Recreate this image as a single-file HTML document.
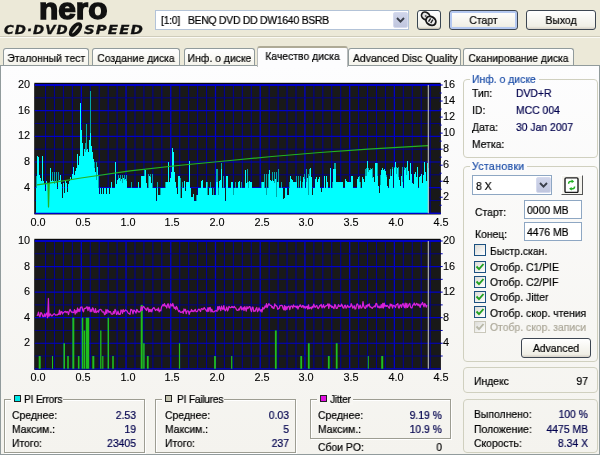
<!DOCTYPE html>
<html lang="ru"><head><meta charset="utf-8"><title>Nero CD-DVD Speed</title>
<style>
html,body{margin:0;padding:0;}
body{width:600px;height:455px;overflow:hidden;background:#ece9d8;position:relative;font-family:"Liberation Sans",sans-serif;font-size:11.4px;color:#000;}
.t{position:absolute;white-space:nowrap;line-height:12px;height:12px;transform:scaleX(0.912);transform-origin:0 50%;will-change:transform;-webkit-text-stroke:0.22px;}
.c{text-align:center;transform-origin:50% 50%;}
.r{text-align:right;transform-origin:100% 50%;}
.nv{color:#00004e;}
.bl{color:#1c4ea8;}
.gr{color:#aca899;}
.ax{font-size:10.9px;transform:none;-webkit-text-stroke:0.1px;}
.abs{position:absolute;}
.gb{position:absolute;border:1px solid #d0d0bf;border-radius:4px;box-sizing:border-box;}
.eg{position:absolute;box-sizing:border-box;border:1px solid #9d9d92;box-shadow:1px 1px 0 #fff, inset 1px 1px 0 #fff;}
.lg{position:absolute;background:#fafaf7;height:10px;}
.tab{position:absolute;box-sizing:border-box;border:1px solid #919b9c;border-bottom:none;border-radius:3px 3px 0 0;background:linear-gradient(#ffffff,#f5f4ec);}
.inp{position:absolute;box-sizing:border-box;border:1px solid #8ea7c3;background:#fff;}
.btn{position:absolute;box-sizing:border-box;border:1px solid #3d4652;border-radius:3px;background:linear-gradient(#ffffff,#f0efe6 85%,#d6d0c5);}
.cb{position:absolute;box-sizing:border-box;width:12px;height:12px;border:1px solid #1c5180;background:linear-gradient(135deg,#dcdcd7,#ffffff);}
.dd{position:absolute;box-sizing:border-box;border:1px solid #d5daee;border-radius:2px;background:linear-gradient(#d0d5ea,#c0c6de);}
</style></head><body>

<div class="abs" style="left:0;top:65px;width:600px;height:389.5px;box-sizing:border-box;border:1px solid #919b9c;background:linear-gradient(#fdfdfe,#f4f3ee);"></div>
<div class="abs" style="left:0;top:36px;width:600px;height:1px;background:#cfccbb;"></div><div class="abs" style="left:0;top:37px;width:600px;height:1px;background:#fbfaf5;"></div>
<div class="t" id="nero" style="left:39px;top:-9.4px;height:36px;line-height:36px;font-size:29.4px;font-weight:bold;letter-spacing:0px;-webkit-text-stroke:1.4px #111;color:#111;transform-origin:0 50%;transform:scaleX(1.075);">nero</div>
<div class="t" id="cdd" style="left:3.8px;top:23.6px;font-family:'DejaVu Sans','Liberation Sans',sans-serif;font-size:11.8px;font-weight:bold;font-style:italic;letter-spacing:0.9px;transform-origin:0 50%;transform:scaleX(1.135);-webkit-text-stroke:0.3px #111;color:#111;">CD&middot;DVD</div>
<svg class="abs" style="left:67px;top:22px" width="17" height="15" viewBox="0 0 17 15"><ellipse cx="8.5" cy="7.5" rx="8.6" ry="4.9" transform="rotate(-50 8.5 7.5)" fill="#111"/><ellipse cx="8.5" cy="7.5" rx="5" ry="0.9" transform="rotate(-50 8.5 7.5)" fill="#d8d5c6"/></svg>
<div class="t" id="spd" style="left:84px;top:23.6px;font-family:'DejaVu Sans','Liberation Sans',sans-serif;font-size:11.8px;font-weight:bold;font-style:italic;letter-spacing:0.9px;transform-origin:0 50%;transform:scaleX(1.26);-webkit-text-stroke:0.3px #111;color:#111;">SPEED</div>
<div class="inp" style="left:155px;top:10px;width:254px;height:20px;border-color:#b3c3d8;"></div>
<div class="t" style="left:161px;top:14.4px;letter-spacing:-0.27px;">[1:0]&nbsp;&nbsp;&nbsp;BENQ DVD DD DW1640 BSRB</div>
<div class="dd" style="left:393px;top:12px;width:15px;height:16px;"></div>
<svg class="abs" style="left:396px;top:17px" width="9" height="7" viewBox="0 0 9 7"><path d="M1 1 L4.5 4.6 L8 1" fill="none" stroke="#3a3f4a" stroke-width="1.9"/></svg>
<div class="btn" style="left:417px;top:10px;width:24px;height:20px;border-color:#3a4652;box-shadow:inset 0 -1px 0 #c9c5b6;"></div>
<svg class="abs" style="left:419px;top:10px" width="20" height="18" viewBox="0 0 20 18"><g transform="rotate(32 10 9)"><ellipse cx="5.6" cy="8.2" rx="4.4" ry="3.6" fill="#e4e4e4" stroke="#1a1a1a" stroke-width="1.7"/><ellipse cx="12.6" cy="9.6" rx="5.2" ry="4.1" fill="#ededed" stroke="#151515" stroke-width="1.9"/><path d="M11 7.5 L11 11.5 M13.6 7.5 L13.6 11.5" stroke="#222" stroke-width="1.4"/><circle cx="5.6" cy="8.2" r="1" fill="#555"/></g></svg>
<div class="btn" style="left:449px;top:10px;width:69px;height:20px;box-shadow:inset 0 0 0 2px #b4c8f0;"></div>
<div class="t c" style="left:449px;top:14.4px;width:69px;">Старт</div>
<div class="btn" style="left:526px;top:10px;width:70px;height:20px;"></div>
<div class="t c" style="left:526px;top:14.4px;width:70px;">Выход</div>
<div class="tab" style="left:2.5px;top:48px;width:86.5px;height:17px;"></div>
<div class="t c" style="left:2.5px;top:52.4px;width:86.5px;">Эталонный тест</div>
<div class="tab" style="left:92px;top:48px;width:88px;height:17px;"></div>
<div class="t c" style="left:92px;top:52.4px;width:88px;">Создание диска</div>
<div class="tab" style="left:184px;top:48px;width:71px;height:17px;"></div>
<div class="t c" style="left:184px;top:52.4px;width:71px;">Инф. о диске</div>
<div class="tab" style="left:257px;top:46px;width:91px;height:21px;background:#fdfdfe;border-top:2px solid #aeaa96;border-left-color:#b9bcbc;border-right-color:#b9bcbc;"></div>
<div class="t c" style="left:257px;top:50px;width:91px;">Качество диска</div>
<div class="tab" style="left:348px;top:48px;width:113px;height:17px;"></div>
<div class="t c" style="left:348px;top:52.4px;width:113px;">Advanced Disc Quality</div>
<div class="tab" style="left:463px;top:48px;width:111px;height:17px;"></div>
<div class="t c" style="left:463px;top:52.4px;width:111px;">Сканирование диска</div>
<svg class="abs" style="left:0;top:0;filter:blur(0.3px);" width="600" height="455" viewBox="0 0 600 455">
<rect x="34.3" y="82.8" width="406.4" height="131.5" fill="#0a0a0a"/><rect x="34.599999999999994" y="84.0" width="406.09999999999997" height="130.3" fill="#191919"/>
<line x1="45.54" y1="85.0" x2="45.54" y2="213.3" stroke="#000094" stroke-width="1.05"/><line x1="54.49" y1="85.0" x2="54.49" y2="213.3" stroke="#000094" stroke-width="1.05"/><line x1="63.43" y1="85.0" x2="63.43" y2="213.3" stroke="#000094" stroke-width="1.05"/><line x1="72.38" y1="85.0" x2="72.38" y2="213.3" stroke="#000094" stroke-width="1.05"/><line x1="81.32" y1="85.0" x2="81.32" y2="213.3" stroke="#0000c8" stroke-width="1.3"/><line x1="90.27" y1="85.0" x2="90.27" y2="213.3" stroke="#000094" stroke-width="1.05"/><line x1="99.21" y1="85.0" x2="99.21" y2="213.3" stroke="#000094" stroke-width="1.05"/><line x1="108.16" y1="85.0" x2="108.16" y2="213.3" stroke="#000094" stroke-width="1.05"/><line x1="117.10" y1="85.0" x2="117.10" y2="213.3" stroke="#000094" stroke-width="1.05"/><line x1="126.04" y1="85.0" x2="126.04" y2="213.3" stroke="#0000c8" stroke-width="1.3"/><line x1="134.99" y1="85.0" x2="134.99" y2="213.3" stroke="#000094" stroke-width="1.05"/><line x1="143.93" y1="85.0" x2="143.93" y2="213.3" stroke="#000094" stroke-width="1.05"/><line x1="152.88" y1="85.0" x2="152.88" y2="213.3" stroke="#000094" stroke-width="1.05"/><line x1="161.82" y1="85.0" x2="161.82" y2="213.3" stroke="#000094" stroke-width="1.05"/><line x1="170.77" y1="85.0" x2="170.77" y2="213.3" stroke="#0000c8" stroke-width="1.3"/><line x1="179.71" y1="85.0" x2="179.71" y2="213.3" stroke="#000094" stroke-width="1.05"/><line x1="188.66" y1="85.0" x2="188.66" y2="213.3" stroke="#000094" stroke-width="1.05"/><line x1="197.60" y1="85.0" x2="197.60" y2="213.3" stroke="#000094" stroke-width="1.05"/><line x1="206.54" y1="85.0" x2="206.54" y2="213.3" stroke="#000094" stroke-width="1.05"/><line x1="215.49" y1="85.0" x2="215.49" y2="213.3" stroke="#0000c8" stroke-width="1.3"/><line x1="224.43" y1="85.0" x2="224.43" y2="213.3" stroke="#000094" stroke-width="1.05"/><line x1="233.38" y1="85.0" x2="233.38" y2="213.3" stroke="#000094" stroke-width="1.05"/><line x1="242.32" y1="85.0" x2="242.32" y2="213.3" stroke="#000094" stroke-width="1.05"/><line x1="251.27" y1="85.0" x2="251.27" y2="213.3" stroke="#000094" stroke-width="1.05"/><line x1="260.21" y1="85.0" x2="260.21" y2="213.3" stroke="#0000c8" stroke-width="1.3"/><line x1="269.16" y1="85.0" x2="269.16" y2="213.3" stroke="#000094" stroke-width="1.05"/><line x1="278.10" y1="85.0" x2="278.10" y2="213.3" stroke="#000094" stroke-width="1.05"/><line x1="287.04" y1="85.0" x2="287.04" y2="213.3" stroke="#000094" stroke-width="1.05"/><line x1="295.99" y1="85.0" x2="295.99" y2="213.3" stroke="#000094" stroke-width="1.05"/><line x1="304.93" y1="85.0" x2="304.93" y2="213.3" stroke="#0000c8" stroke-width="1.3"/><line x1="313.88" y1="85.0" x2="313.88" y2="213.3" stroke="#000094" stroke-width="1.05"/><line x1="322.82" y1="85.0" x2="322.82" y2="213.3" stroke="#000094" stroke-width="1.05"/><line x1="331.77" y1="85.0" x2="331.77" y2="213.3" stroke="#000094" stroke-width="1.05"/><line x1="340.71" y1="85.0" x2="340.71" y2="213.3" stroke="#000094" stroke-width="1.05"/><line x1="349.66" y1="85.0" x2="349.66" y2="213.3" stroke="#0000c8" stroke-width="1.3"/><line x1="358.60" y1="85.0" x2="358.60" y2="213.3" stroke="#000094" stroke-width="1.05"/><line x1="367.54" y1="85.0" x2="367.54" y2="213.3" stroke="#000094" stroke-width="1.05"/><line x1="376.49" y1="85.0" x2="376.49" y2="213.3" stroke="#000094" stroke-width="1.05"/><line x1="385.43" y1="85.0" x2="385.43" y2="213.3" stroke="#000094" stroke-width="1.05"/><line x1="394.38" y1="85.0" x2="394.38" y2="213.3" stroke="#0000c8" stroke-width="1.3"/><line x1="403.32" y1="85.0" x2="403.32" y2="213.3" stroke="#000094" stroke-width="1.05"/><line x1="412.27" y1="85.0" x2="412.27" y2="213.3" stroke="#000094" stroke-width="1.05"/><line x1="421.21" y1="85.0" x2="421.21" y2="213.3" stroke="#000094" stroke-width="1.05"/><line x1="430.16" y1="85.0" x2="430.16" y2="213.3" stroke="#000094" stroke-width="1.05"/><line x1="34.8" y1="85.00" x2="440.7" y2="85.00" stroke="#0000c8" stroke-width="2.0"/><line x1="34.8" y1="97.83" x2="440.7" y2="97.83" stroke="#000090" stroke-width="0.9"/><line x1="34.8" y1="110.66" x2="440.7" y2="110.66" stroke="#0000c8" stroke-width="1.2"/><line x1="34.8" y1="123.49" x2="440.7" y2="123.49" stroke="#000090" stroke-width="0.9"/><line x1="34.8" y1="136.32" x2="440.7" y2="136.32" stroke="#0000c8" stroke-width="1.2"/><line x1="34.8" y1="149.15" x2="440.7" y2="149.15" stroke="#000090" stroke-width="0.9"/><line x1="34.8" y1="161.98" x2="440.7" y2="161.98" stroke="#0000c8" stroke-width="1.2"/><line x1="34.8" y1="174.81" x2="440.7" y2="174.81" stroke="#000090" stroke-width="0.9"/><line x1="34.8" y1="187.64" x2="440.7" y2="187.64" stroke="#0000c8" stroke-width="1.2"/><line x1="34.8" y1="200.47" x2="440.7" y2="200.47" stroke="#000090" stroke-width="0.9"/><line x1="34.8" y1="213.30" x2="440.7" y2="213.30" stroke="#0000c8" stroke-width="1.2"/>
<polygon points="35.5,213.3 35.5,175.5 36.5,175.5 36.5,155.6 37.5,155.6 37.5,156.8 38.5,156.8 38.5,174.8 39.5,174.8 39.5,178.0 40.5,178.0 40.5,181.2 41.5,181.2 41.5,155.6 42.5,155.6 42.5,181.2 43.5,181.2 43.5,184.4 44.5,184.4 44.5,190.8 45.5,190.8 45.5,181.2 46.5,181.2 46.5,182.5 47.5,182.5 47.5,192.8 48.5,192.8 48.5,184.4 49.5,184.4 49.5,168.4 50.5,168.4 50.5,181.2 51.5,181.2 51.5,171.6 52.5,171.6 52.5,181.2 53.5,181.2 53.5,171.6 54.5,171.6 54.5,181.2 55.5,181.2 55.5,171.6 56.5,171.6 56.5,188.9 57.5,188.9 57.5,171.6 58.5,171.6 58.5,179.9 59.5,179.9 59.5,174.8 60.5,174.8 60.5,184.4 61.5,184.4 61.5,197.9 62.5,197.9 62.5,182.5 63.5,182.5 63.5,192.8 64.5,192.8 64.5,181.2 65.5,181.2 65.5,182.5 66.5,182.5 66.5,192.1 67.5,192.1 67.5,183.8 68.5,183.8 68.5,181.2 69.5,181.2 69.5,177.4 70.5,177.4 70.5,179.9 71.5,179.9 71.5,173.5 72.5,173.5 72.5,167.1 73.5,167.1 73.5,174.8 74.5,174.8 74.5,171.0 75.5,171.0 75.5,168.4 76.5,168.4 76.5,154.3 77.5,154.3 77.5,164.5 78.5,164.5 78.5,155.6 79.5,155.6 79.5,103.0 80.5,103.0 80.5,129.9 81.5,129.9 81.5,142.7 82.5,142.7 82.5,155.6 83.5,155.6 83.5,149.2 84.5,149.2 84.5,142.7 85.5,142.7 85.5,123.5 86.5,123.5 86.5,149.2 87.5,149.2 87.5,152.4 88.5,152.4 88.5,139.5 89.5,139.5 89.5,91.4 90.5,91.4 90.5,145.9 91.5,145.9 91.5,152.4 92.5,152.4 92.5,158.8 93.5,158.8 93.5,162.0 94.5,162.0 94.5,172.2 95.5,172.2 95.5,162.0 96.5,162.0 96.5,167.1 97.5,167.1 97.5,174.8 98.5,174.8 98.5,194.1 99.5,194.1 99.5,188.3 100.5,188.3 100.5,194.1 101.5,194.1 101.5,188.3 102.5,188.3 102.5,194.1 103.5,194.1 103.5,188.3 104.5,188.3 104.5,188.3 105.5,188.3 105.5,194.1 106.5,194.1 106.5,188.3 107.5,188.3 107.5,188.3 108.5,188.3 108.5,194.1 109.5,194.1 109.5,188.3 110.5,188.3 110.5,181.9 111.5,181.9 111.5,188.3 112.5,188.3 112.5,188.3 113.5,188.3 113.5,188.3 114.5,188.3 114.5,162.0 115.5,162.0 115.5,184.4 116.5,184.4 116.5,179.9 117.5,179.9 117.5,174.8 118.5,174.8 118.5,178.0 119.5,178.0 119.5,174.8 120.5,174.8 120.5,179.3 121.5,179.3 121.5,174.8 122.5,174.8 122.5,178.0 123.5,178.0 123.5,174.8 124.5,174.8 124.5,178.7 125.5,178.7 125.5,174.8 126.5,174.8 126.5,188.3 127.5,188.3 127.5,188.3 128.5,188.3 128.5,188.3 129.5,188.3 129.5,188.3 130.5,188.3 130.5,181.9 131.5,181.9 131.5,188.3 132.5,188.3 132.5,188.3 133.5,188.3 133.5,188.3 134.5,188.3 134.5,188.3 135.5,188.3 135.5,188.3 136.5,188.3 136.5,188.3 137.5,188.3 137.5,181.9 138.5,181.9 138.5,188.3 139.5,188.3 139.5,188.3 140.5,188.3 140.5,175.5 141.5,175.5 141.5,175.5 142.5,175.5 142.5,175.5 143.5,175.5 143.5,169.0 144.5,169.0 144.5,169.7 145.5,169.7 145.5,182.5 146.5,182.5 146.5,188.3 147.5,188.3 147.5,173.5 148.5,173.5 148.5,176.1 149.5,176.1 149.5,173.5 150.5,173.5 150.5,182.5 151.5,182.5 151.5,173.5 152.5,173.5 152.5,188.3 153.5,188.3 153.5,188.3 154.5,188.3 154.5,188.3 155.5,188.3 155.5,201.1 156.5,201.1 156.5,181.9 157.5,181.9 157.5,194.7 158.5,194.7 158.5,194.7 159.5,194.7 159.5,188.3 160.5,188.3 160.5,188.3 161.5,188.3 161.5,188.3 162.5,188.3 162.5,188.3 163.5,188.3 163.5,188.3 164.5,188.3 164.5,181.9 165.5,181.9 165.5,181.9 166.5,181.9 166.5,181.9 167.5,181.9 167.5,162.0 168.5,162.0 168.5,181.9 169.5,181.9 169.5,178.0 170.5,178.0 170.5,171.6 171.5,171.6 171.5,147.9 172.5,147.9 172.5,152.4 173.5,152.4 173.5,171.6 174.5,171.6 174.5,181.9 175.5,181.9 175.5,188.3 176.5,188.3 176.5,194.1 177.5,194.1 177.5,176.1 178.5,176.1 178.5,175.5 179.5,175.5 179.5,178.0 180.5,178.0 180.5,197.9 181.5,197.9 181.5,181.9 182.5,181.9 182.5,188.3 183.5,188.3 183.5,181.2 184.5,181.2 184.5,190.8 185.5,190.8 185.5,181.9 186.5,181.9 186.5,181.9 187.5,181.9 187.5,181.9 188.5,181.9 188.5,160.7 189.5,160.7 189.5,187.6 190.5,187.6 190.5,196.6 191.5,196.6 191.5,196.6 192.5,196.6 192.5,194.1 193.5,194.1 193.5,201.1 194.5,201.1 194.5,201.1 195.5,201.1 195.5,194.7 196.5,194.7 196.5,194.7 197.5,194.7 197.5,188.3 198.5,188.3 198.5,188.3 199.5,188.3 199.5,188.3 200.5,188.3 200.5,181.2 201.5,181.2 201.5,179.9 202.5,179.9 202.5,188.3 203.5,188.3 203.5,188.3 204.5,188.3 204.5,188.3 205.5,188.3 205.5,181.9 206.5,181.9 206.5,181.9 207.5,181.9 207.5,194.7 208.5,194.7 208.5,188.3 209.5,188.3 209.5,181.9 210.5,181.9 210.5,188.3 211.5,188.3 211.5,194.7 212.5,194.7 212.5,188.3 213.5,188.3 213.5,194.7 214.5,194.7 214.5,194.7 215.5,194.7 215.5,169.0 216.5,169.0 216.5,169.0 217.5,169.0 217.5,188.3 218.5,188.3 218.5,181.2 219.5,181.2 219.5,179.9 220.5,179.9 220.5,162.6 221.5,162.6 221.5,188.3 222.5,188.3 222.5,175.5 223.5,175.5 223.5,188.3 224.5,188.3 224.5,201.1 225.5,201.1 225.5,175.5 226.5,175.5 226.5,175.5 227.5,175.5 227.5,188.3 228.5,188.3 228.5,188.3 229.5,188.3 229.5,188.3 230.5,188.3 230.5,181.9 231.5,181.9 231.5,181.9 232.5,181.9 232.5,188.3 233.5,188.3 233.5,188.3 234.5,188.3 234.5,181.9 235.5,181.9 235.5,188.3 236.5,188.3 236.5,188.3 237.5,188.3 237.5,181.9 238.5,181.9 238.5,181.2 239.5,181.2 239.5,188.3 240.5,188.3 240.5,181.9 241.5,181.9 241.5,188.3 242.5,188.3 242.5,188.3 243.5,188.3 243.5,188.3 244.5,188.3 244.5,169.7 245.5,169.7 245.5,182.5 246.5,182.5 246.5,169.0 247.5,169.0 247.5,181.9 248.5,181.9 248.5,181.2 249.5,181.2 249.5,181.9 250.5,181.9 250.5,181.9 251.5,181.9 251.5,188.3 252.5,188.3 252.5,188.3 253.5,188.3 253.5,188.3 254.5,188.3 254.5,188.3 255.5,188.3 255.5,188.3 256.5,188.3 256.5,188.3 257.5,188.3 257.5,188.3 258.5,188.3 258.5,188.3 259.5,188.3 259.5,188.3 260.5,188.3 260.5,181.9 261.5,181.9 261.5,181.9 262.5,181.9 262.5,181.9 263.5,181.9 263.5,173.5 264.5,173.5 264.5,188.3 265.5,188.3 265.5,173.5 266.5,173.5 266.5,188.3 267.5,188.3 267.5,173.5 268.5,173.5 268.5,169.7 269.5,169.7 269.5,179.9 270.5,179.9 270.5,181.2 271.5,181.2 271.5,171.6 272.5,171.6 272.5,181.2 273.5,181.2 273.5,171.6 274.5,171.6 274.5,178.7 275.5,178.7 275.5,171.6 276.5,171.6 276.5,181.9 277.5,181.9 277.5,169.0 278.5,169.0 278.5,188.3 279.5,188.3 279.5,188.3 280.5,188.3 280.5,181.9 281.5,181.9 281.5,188.3 282.5,188.3 282.5,199.2 283.5,199.2 283.5,197.9 284.5,197.9 284.5,188.3 285.5,188.3 285.5,188.3 286.5,188.3 286.5,194.7 287.5,194.7 287.5,194.7 288.5,194.7 288.5,181.9 289.5,181.9 289.5,175.5 290.5,175.5 290.5,178.7 291.5,178.7 291.5,179.9 292.5,179.9 292.5,181.9 293.5,181.9 293.5,181.9 294.5,181.9 294.5,181.9 295.5,181.9 295.5,176.1 296.5,176.1 296.5,188.3 297.5,188.3 297.5,176.1 298.5,176.1 298.5,188.3 299.5,188.3 299.5,176.1 300.5,176.1 300.5,188.3 301.5,188.3 301.5,181.9 302.5,181.9 302.5,177.4 303.5,177.4 303.5,173.5 304.5,173.5 304.5,188.3 305.5,188.3 305.5,169.0 306.5,169.0 306.5,178.0 307.5,178.0 307.5,173.5 308.5,173.5 308.5,169.0 309.5,169.0 309.5,168.4 310.5,168.4 310.5,177.4 311.5,177.4 311.5,194.7 312.5,194.7 312.5,188.3 313.5,188.3 313.5,188.3 314.5,188.3 314.5,178.7 315.5,178.7 315.5,177.4 316.5,177.4 316.5,181.9 317.5,181.9 317.5,178.7 318.5,178.7 318.5,177.4 319.5,177.4 319.5,187.6 320.5,187.6 320.5,191.5 321.5,191.5 321.5,188.3 322.5,188.3 322.5,188.3 323.5,188.3 323.5,175.5 324.5,175.5 324.5,188.3 325.5,188.3 325.5,175.5 326.5,175.5 326.5,181.9 327.5,181.9 327.5,188.3 328.5,188.3 328.5,188.3 329.5,188.3 329.5,168.4 330.5,168.4 330.5,187.6 331.5,187.6 331.5,181.9 332.5,181.9 332.5,169.0 333.5,169.0 333.5,162.6 334.5,162.6 334.5,162.6 335.5,162.6 335.5,181.9 336.5,181.9 336.5,181.9 337.5,181.9 337.5,181.9 338.5,181.9 338.5,181.9 339.5,181.9 339.5,181.9 340.5,181.9 340.5,181.9 341.5,181.9 341.5,181.9 342.5,181.9 342.5,188.3 343.5,188.3 343.5,188.3 344.5,188.3 344.5,178.7 345.5,178.7 345.5,181.2 346.5,181.2 346.5,181.9 347.5,181.9 347.5,181.9 348.5,181.9 348.5,181.9 349.5,181.9 349.5,181.9 350.5,181.9 350.5,175.5 351.5,175.5 351.5,175.5 352.5,175.5 352.5,188.3 353.5,188.3 353.5,188.3 354.5,188.3 354.5,188.3 355.5,188.3 355.5,188.3 356.5,188.3 356.5,178.7 357.5,178.7 357.5,177.4 358.5,177.4 358.5,175.5 359.5,175.5 359.5,181.9 360.5,181.9 360.5,188.3 361.5,188.3 361.5,177.4 362.5,177.4 362.5,178.7 363.5,178.7 363.5,181.9 364.5,181.9 364.5,169.0 365.5,169.0 365.5,168.4 366.5,168.4 366.5,160.7 367.5,160.7 367.5,168.4 368.5,168.4 368.5,169.7 369.5,169.7 369.5,168.4 370.5,168.4 370.5,169.0 371.5,169.0 371.5,168.4 372.5,168.4 372.5,177.4 373.5,177.4 373.5,181.9 374.5,181.9 374.5,162.6 375.5,162.6 375.5,162.6 376.5,162.6 376.5,162.6 377.5,162.6 377.5,186.4 378.5,186.4 378.5,192.8 379.5,192.8 379.5,174.8 380.5,174.8 380.5,169.7 381.5,169.7 381.5,168.4 382.5,168.4 382.5,169.7 383.5,169.7 383.5,169.0 384.5,169.0 384.5,171.0 385.5,171.0 385.5,174.8 386.5,174.8 386.5,186.4 387.5,186.4 387.5,187.6 388.5,187.6 388.5,178.7 389.5,178.7 389.5,169.0 390.5,169.0 390.5,175.5 391.5,175.5 391.5,167.1 392.5,167.1 392.5,188.3 393.5,188.3 393.5,167.1 394.5,167.1 394.5,162.0 395.5,162.0 395.5,167.1 396.5,167.1 396.5,168.4 397.5,168.4 397.5,167.1 398.5,167.1 398.5,179.9 399.5,179.9 399.5,186.4 400.5,186.4 400.5,176.1 401.5,176.1 401.5,167.1 402.5,167.1 402.5,188.3 403.5,188.3 403.5,167.1 404.5,167.1 404.5,168.4 405.5,168.4 405.5,167.1 406.5,167.1 406.5,160.7 407.5,160.7 407.5,171.0 408.5,171.0 408.5,179.9 409.5,179.9 409.5,163.3 410.5,163.3 410.5,173.5 411.5,173.5 411.5,182.5 412.5,182.5 412.5,183.8 413.5,183.8 413.5,173.5 414.5,173.5 414.5,171.6 415.5,171.6 415.5,177.4 416.5,177.4 416.5,167.1 417.5,167.1 417.5,187.6 418.5,187.6 418.5,177.4 419.5,177.4 419.5,176.1 420.5,176.1 420.5,173.5 421.5,173.5 421.5,182.5 422.5,182.5 422.5,174.8 423.5,174.8 423.5,162.0 424.5,162.0 424.5,171.6 425.5,171.6 425.5,181.2 426.5,181.2 426.5,163.3 427.5,163.3 427.5,168.4 428.5,168.4 428.5,213.3" fill="#00a8a8" shape-rendering="crispEdges"/>
<polygon points="35.5,213.3 35.5,188.3 36.5,188.3 36.5,155.6 37.5,155.6 37.5,156.8 38.5,156.8 38.5,174.8 39.5,174.8 39.5,178.0 40.5,178.0 40.5,181.2 41.5,181.2 41.5,155.6 42.5,155.6 42.5,181.2 43.5,181.2 43.5,184.4 44.5,184.4 44.5,190.8 45.5,190.8 45.5,181.2 46.5,181.2 46.5,182.5 47.5,182.5 47.5,192.8 48.5,192.8 48.5,184.4 49.5,184.4 49.5,168.4 50.5,168.4 50.5,181.2 51.5,181.2 51.5,179.9 52.5,179.9 52.5,181.2 53.5,181.2 53.5,184.4 54.5,184.4 54.5,181.2 55.5,181.2 55.5,182.5 56.5,182.5 56.5,188.9 57.5,188.9 57.5,181.2 58.5,181.2 58.5,179.9 59.5,179.9 59.5,174.8 60.5,174.8 60.5,184.4 61.5,184.4 61.5,197.9 62.5,197.9 62.5,182.5 63.5,182.5 63.5,192.8 64.5,192.8 64.5,181.2 65.5,181.2 65.5,182.5 66.5,182.5 66.5,192.1 67.5,192.1 67.5,183.8 68.5,183.8 68.5,181.2 69.5,181.2 69.5,177.4 70.5,177.4 70.5,179.9 71.5,179.9 71.5,173.5 72.5,173.5 72.5,167.1 73.5,167.1 73.5,174.8 74.5,174.8 74.5,171.0 75.5,171.0 75.5,168.4 76.5,168.4 76.5,154.3 77.5,154.3 77.5,164.5 78.5,164.5 78.5,155.6 79.5,155.6 79.5,103.0 80.5,103.0 80.5,129.9 81.5,129.9 81.5,142.7 82.5,142.7 82.5,155.6 83.5,155.6 83.5,149.2 84.5,149.2 84.5,152.4 85.5,152.4 85.5,150.4 86.5,150.4 86.5,149.2 87.5,149.2 87.5,152.4 88.5,152.4 88.5,139.5 89.5,139.5 89.5,133.1 90.5,133.1 90.5,145.9 91.5,145.9 91.5,152.4 92.5,152.4 92.5,158.8 93.5,158.8 93.5,168.4 94.5,168.4 94.5,172.2 95.5,172.2 95.5,179.9 96.5,179.9 96.5,167.1 97.5,167.1 97.5,188.3 98.5,188.3 98.5,194.1 99.5,194.1 99.5,188.3 100.5,188.3 100.5,194.1 101.5,194.1 101.5,188.3 102.5,188.3 102.5,194.1 103.5,194.1 103.5,188.3 104.5,188.3 104.5,188.3 105.5,188.3 105.5,194.1 106.5,194.1 106.5,188.3 107.5,188.3 107.5,188.3 108.5,188.3 108.5,194.1 109.5,194.1 109.5,188.3 110.5,188.3 110.5,181.9 111.5,181.9 111.5,188.3 112.5,188.3 112.5,188.3 113.5,188.3 113.5,188.3 114.5,188.3 114.5,162.0 115.5,162.0 115.5,184.4 116.5,184.4 116.5,179.9 117.5,179.9 117.5,178.7 118.5,178.7 118.5,178.0 119.5,178.0 119.5,181.2 120.5,181.2 120.5,179.3 121.5,179.3 121.5,182.5 122.5,182.5 122.5,178.0 123.5,178.0 123.5,179.9 124.5,179.9 124.5,178.7 125.5,178.7 125.5,181.2 126.5,181.2 126.5,188.3 127.5,188.3 127.5,188.3 128.5,188.3 128.5,188.3 129.5,188.3 129.5,188.3 130.5,188.3 130.5,188.3 131.5,188.3 131.5,188.3 132.5,188.3 132.5,188.3 133.5,188.3 133.5,188.3 134.5,188.3 134.5,188.3 135.5,188.3 135.5,188.3 136.5,188.3 136.5,188.3 137.5,188.3 137.5,181.9 138.5,181.9 138.5,188.3 139.5,188.3 139.5,188.3 140.5,188.3 140.5,175.5 141.5,175.5 141.5,175.5 142.5,175.5 142.5,175.5 143.5,175.5 143.5,175.5 144.5,175.5 144.5,169.7 145.5,169.7 145.5,182.5 146.5,182.5 146.5,188.3 147.5,188.3 147.5,188.3 148.5,188.3 148.5,176.1 149.5,176.1 149.5,177.4 150.5,177.4 150.5,182.5 151.5,182.5 151.5,188.3 152.5,188.3 152.5,188.3 153.5,188.3 153.5,188.3 154.5,188.3 154.5,188.3 155.5,188.3 155.5,201.1 156.5,201.1 156.5,188.3 157.5,188.3 157.5,194.7 158.5,194.7 158.5,194.7 159.5,194.7 159.5,194.7 160.5,194.7 160.5,188.3 161.5,188.3 161.5,188.3 162.5,188.3 162.5,188.3 163.5,188.3 163.5,188.3 164.5,188.3 164.5,188.3 165.5,188.3 165.5,181.9 166.5,181.9 166.5,181.9 167.5,181.9 167.5,162.0 168.5,162.0 168.5,181.9 169.5,181.9 169.5,178.0 170.5,178.0 170.5,171.6 171.5,171.6 171.5,147.9 172.5,147.9 172.5,152.4 173.5,152.4 173.5,171.6 174.5,171.6 174.5,181.9 175.5,181.9 175.5,188.3 176.5,188.3 176.5,194.1 177.5,194.1 177.5,176.1 178.5,176.1 178.5,175.5 179.5,175.5 179.5,197.9 180.5,197.9 180.5,197.9 181.5,197.9 181.5,188.3 182.5,188.3 182.5,188.3 183.5,188.3 183.5,181.2 184.5,181.2 184.5,190.8 185.5,190.8 185.5,181.9 186.5,181.9 186.5,181.9 187.5,181.9 187.5,181.9 188.5,181.9 188.5,160.7 189.5,160.7 189.5,187.6 190.5,187.6 190.5,196.6 191.5,196.6 191.5,196.6 192.5,196.6 192.5,194.1 193.5,194.1 193.5,201.1 194.5,201.1 194.5,201.1 195.5,201.1 195.5,201.1 196.5,201.1 196.5,194.7 197.5,194.7 197.5,188.3 198.5,188.3 198.5,188.3 199.5,188.3 199.5,188.3 200.5,188.3 200.5,181.2 201.5,181.2 201.5,179.9 202.5,179.9 202.5,188.3 203.5,188.3 203.5,188.3 204.5,188.3 204.5,188.3 205.5,188.3 205.5,181.9 206.5,181.9 206.5,194.7 207.5,194.7 207.5,194.7 208.5,194.7 208.5,188.3 209.5,188.3 209.5,188.3 210.5,188.3 210.5,188.3 211.5,188.3 211.5,194.7 212.5,194.7 212.5,194.7 213.5,194.7 213.5,194.7 214.5,194.7 214.5,194.7 215.5,194.7 215.5,181.9 216.5,181.9 216.5,181.9 217.5,181.9 217.5,194.7 218.5,194.7 218.5,181.2 219.5,181.2 219.5,179.9 220.5,179.9 220.5,169.0 221.5,169.0 221.5,188.3 222.5,188.3 222.5,188.3 223.5,188.3 223.5,188.3 224.5,188.3 224.5,201.1 225.5,201.1 225.5,175.5 226.5,175.5 226.5,175.5 227.5,175.5 227.5,188.3 228.5,188.3 228.5,188.3 229.5,188.3 229.5,188.3 230.5,188.3 230.5,181.9 231.5,181.9 231.5,181.9 232.5,181.9 232.5,194.7 233.5,194.7 233.5,188.3 234.5,188.3 234.5,188.3 235.5,188.3 235.5,188.3 236.5,188.3 236.5,188.3 237.5,188.3 237.5,181.9 238.5,181.9 238.5,181.2 239.5,181.2 239.5,188.3 240.5,188.3 240.5,188.3 241.5,188.3 241.5,188.3 242.5,188.3 242.5,188.3 243.5,188.3 243.5,188.3 244.5,188.3 244.5,169.7 245.5,169.7 245.5,182.5 246.5,182.5 246.5,181.9 247.5,181.9 247.5,188.3 248.5,188.3 248.5,181.2 249.5,181.2 249.5,181.9 250.5,181.9 250.5,181.9 251.5,181.9 251.5,188.3 252.5,188.3 252.5,188.3 253.5,188.3 253.5,188.3 254.5,188.3 254.5,188.3 255.5,188.3 255.5,188.3 256.5,188.3 256.5,188.3 257.5,188.3 257.5,188.3 258.5,188.3 258.5,188.3 259.5,188.3 259.5,188.3 260.5,188.3 260.5,188.3 261.5,188.3 261.5,181.9 262.5,181.9 262.5,181.9 263.5,181.9 263.5,188.3 264.5,188.3 264.5,188.3 265.5,188.3 265.5,194.7 266.5,194.7 266.5,188.3 267.5,188.3 267.5,188.3 268.5,188.3 268.5,169.7 269.5,169.7 269.5,179.9 270.5,179.9 270.5,181.2 271.5,181.2 271.5,179.9 272.5,179.9 272.5,181.2 273.5,181.2 273.5,182.5 274.5,182.5 274.5,178.7 275.5,178.7 275.5,196.6 276.5,196.6 276.5,181.9 277.5,181.9 277.5,181.9 278.5,181.9 278.5,188.3 279.5,188.3 279.5,188.3 280.5,188.3 280.5,188.3 281.5,188.3 281.5,188.3 282.5,188.3 282.5,199.2 283.5,199.2 283.5,197.9 284.5,197.9 284.5,188.3 285.5,188.3 285.5,188.3 286.5,188.3 286.5,194.7 287.5,194.7 287.5,194.7 288.5,194.7 288.5,188.3 289.5,188.3 289.5,175.5 290.5,175.5 290.5,178.7 291.5,178.7 291.5,179.9 292.5,179.9 292.5,181.9 293.5,181.9 293.5,181.9 294.5,181.9 294.5,181.9 295.5,181.9 295.5,181.9 296.5,181.9 296.5,188.3 297.5,188.3 297.5,188.3 298.5,188.3 298.5,188.3 299.5,188.3 299.5,181.2 300.5,181.2 300.5,188.3 301.5,188.3 301.5,188.3 302.5,188.3 302.5,177.4 303.5,177.4 303.5,178.7 304.5,178.7 304.5,188.3 305.5,188.3 305.5,181.9 306.5,181.9 306.5,178.0 307.5,178.0 307.5,194.7 308.5,194.7 308.5,175.5 309.5,175.5 309.5,168.4 310.5,168.4 310.5,177.4 311.5,177.4 311.5,194.7 312.5,194.7 312.5,188.3 313.5,188.3 313.5,188.3 314.5,188.3 314.5,178.7 315.5,178.7 315.5,177.4 316.5,177.4 316.5,181.9 317.5,181.9 317.5,178.7 318.5,178.7 318.5,177.4 319.5,177.4 319.5,187.6 320.5,187.6 320.5,191.5 321.5,191.5 321.5,188.3 322.5,188.3 322.5,188.3 323.5,188.3 323.5,175.5 324.5,175.5 324.5,188.3 325.5,188.3 325.5,175.5 326.5,175.5 326.5,181.9 327.5,181.9 327.5,188.3 328.5,188.3 328.5,188.3 329.5,188.3 329.5,168.4 330.5,168.4 330.5,187.6 331.5,187.6 331.5,188.3 332.5,188.3 332.5,169.0 333.5,169.0 333.5,169.0 334.5,169.0 334.5,169.0 335.5,169.0 335.5,181.9 336.5,181.9 336.5,181.9 337.5,181.9 337.5,181.9 338.5,181.9 338.5,181.9 339.5,181.9 339.5,181.9 340.5,181.9 340.5,181.9 341.5,181.9 341.5,181.9 342.5,181.9 342.5,188.3 343.5,188.3 343.5,188.3 344.5,188.3 344.5,178.7 345.5,178.7 345.5,181.2 346.5,181.2 346.5,181.9 347.5,181.9 347.5,181.9 348.5,181.9 348.5,181.9 349.5,181.9 349.5,181.9 350.5,181.9 350.5,175.5 351.5,175.5 351.5,175.5 352.5,175.5 352.5,188.3 353.5,188.3 353.5,188.3 354.5,188.3 354.5,188.3 355.5,188.3 355.5,188.3 356.5,188.3 356.5,178.7 357.5,178.7 357.5,177.4 358.5,177.4 358.5,181.9 359.5,181.9 359.5,188.3 360.5,188.3 360.5,188.3 361.5,188.3 361.5,177.4 362.5,177.4 362.5,178.7 363.5,178.7 363.5,181.9 364.5,181.9 364.5,175.5 365.5,175.5 365.5,175.5 366.5,175.5 366.5,160.7 367.5,160.7 367.5,171.6 368.5,171.6 368.5,169.7 369.5,169.7 369.5,170.3 370.5,170.3 370.5,169.0 371.5,169.0 371.5,178.0 372.5,178.0 372.5,177.4 373.5,177.4 373.5,181.9 374.5,181.9 374.5,162.6 375.5,162.6 375.5,162.6 376.5,162.6 376.5,175.5 377.5,175.5 377.5,186.4 378.5,186.4 378.5,192.8 379.5,192.8 379.5,185.1 380.5,185.1 380.5,169.7 381.5,169.7 381.5,168.4 382.5,168.4 382.5,169.7 383.5,169.7 383.5,169.0 384.5,169.0 384.5,171.0 385.5,171.0 385.5,177.4 386.5,177.4 386.5,186.4 387.5,186.4 387.5,187.6 388.5,187.6 388.5,178.7 389.5,178.7 389.5,175.5 390.5,175.5 390.5,175.5 391.5,175.5 391.5,169.0 392.5,169.0 392.5,188.3 393.5,188.3 393.5,168.4 394.5,168.4 394.5,162.0 395.5,162.0 395.5,173.5 396.5,173.5 396.5,168.4 397.5,168.4 397.5,177.4 398.5,177.4 398.5,179.9 399.5,179.9 399.5,186.4 400.5,186.4 400.5,176.1 401.5,176.1 401.5,181.9 402.5,181.9 402.5,188.3 403.5,188.3 403.5,169.7 404.5,169.7 404.5,168.4 405.5,168.4 405.5,174.8 406.5,174.8 406.5,160.7 407.5,160.7 407.5,171.0 408.5,171.0 408.5,179.9 409.5,179.9 409.5,163.3 410.5,163.3 410.5,173.5 411.5,173.5 411.5,182.5 412.5,182.5 412.5,183.8 413.5,183.8 413.5,173.5 414.5,173.5 414.5,171.6 415.5,171.6 415.5,177.4 416.5,177.4 416.5,167.1 417.5,167.1 417.5,187.6 418.5,187.6 418.5,177.4 419.5,177.4 419.5,176.1 420.5,176.1 420.5,173.5 421.5,173.5 421.5,182.5 422.5,182.5 422.5,174.8 423.5,174.8 423.5,162.0 424.5,162.0 424.5,171.6 425.5,171.6 425.5,181.2 426.5,181.2 426.5,163.3 427.5,163.3 427.5,168.4 428.5,168.4 428.5,213.3" fill="#00ffff" shape-rendering="crispEdges"/>
<line x1="34.8" y1="213.3" x2="440.7" y2="213.3" stroke="#0000c8" stroke-width="1.2"/>
<polyline points="37,184.8 48,183.3 48.5,207 49.2,183.2 81,178 130,170.8 178,165.5 225,161 272,156.5 320,152.5 368,149.2 415,146.4 428,145.6" fill="none" stroke="#22b422" stroke-width="1.25" stroke-linejoin="round"/>
<line x1="428.3" y1="85.0" x2="428.3" y2="213.3" stroke="#c0c0c0" stroke-width="1.1"/>
<line x1="439.5" y1="205.28" x2="441.7" y2="205.28" stroke="#0000b4" stroke-width="1.0"/>
<line x1="439.5" y1="197.26" x2="442.7" y2="197.26" stroke="#0000b4" stroke-width="1.0"/>
<line x1="439.5" y1="189.24" x2="441.7" y2="189.24" stroke="#0000b4" stroke-width="1.0"/>
<line x1="439.5" y1="181.23" x2="442.7" y2="181.23" stroke="#0000b4" stroke-width="1.0"/>
<line x1="439.5" y1="173.21" x2="441.7" y2="173.21" stroke="#0000b4" stroke-width="1.0"/>
<line x1="439.5" y1="165.19" x2="442.7" y2="165.19" stroke="#0000b4" stroke-width="1.0"/>
<line x1="439.5" y1="157.17" x2="441.7" y2="157.17" stroke="#0000b4" stroke-width="1.0"/>
<line x1="439.5" y1="149.15" x2="442.7" y2="149.15" stroke="#0000b4" stroke-width="1.0"/>
<line x1="439.5" y1="141.13" x2="441.7" y2="141.13" stroke="#0000b4" stroke-width="1.0"/>
<line x1="439.5" y1="133.11" x2="442.7" y2="133.11" stroke="#0000b4" stroke-width="1.0"/>
<line x1="439.5" y1="125.09" x2="441.7" y2="125.09" stroke="#0000b4" stroke-width="1.0"/>
<line x1="439.5" y1="117.08" x2="442.7" y2="117.08" stroke="#0000b4" stroke-width="1.0"/>
<line x1="439.5" y1="109.06" x2="441.7" y2="109.06" stroke="#0000b4" stroke-width="1.0"/>
<line x1="439.5" y1="101.04" x2="442.7" y2="101.04" stroke="#0000b4" stroke-width="1.0"/>
<line x1="439.5" y1="93.02" x2="441.7" y2="93.02" stroke="#0000b4" stroke-width="1.0"/>
<line x1="439.5" y1="85.00" x2="442.7" y2="85.00" stroke="#0000b4" stroke-width="1.0"/>
<line x1="439.5" y1="356.02" x2="442.7" y2="356.02" stroke="#0000b4" stroke-width="1.0"/>
<line x1="439.5" y1="343.24" x2="442.7" y2="343.24" stroke="#0000b4" stroke-width="1.0"/>
<line x1="439.5" y1="330.46" x2="442.7" y2="330.46" stroke="#0000b4" stroke-width="1.0"/>
<line x1="439.5" y1="317.68" x2="442.7" y2="317.68" stroke="#0000b4" stroke-width="1.0"/>
<line x1="439.5" y1="304.90" x2="442.7" y2="304.90" stroke="#0000b4" stroke-width="1.0"/>
<line x1="439.5" y1="292.12" x2="442.7" y2="292.12" stroke="#0000b4" stroke-width="1.0"/>
<line x1="439.5" y1="279.34" x2="442.7" y2="279.34" stroke="#0000b4" stroke-width="1.0"/>
<line x1="439.5" y1="266.56" x2="442.7" y2="266.56" stroke="#0000b4" stroke-width="1.0"/>
<line x1="439.5" y1="253.78" x2="442.7" y2="253.78" stroke="#0000b4" stroke-width="1.0"/>
<line x1="439.5" y1="241.00" x2="442.7" y2="241.00" stroke="#0000b4" stroke-width="1.0"/>
<rect x="34.3" y="238.8" width="406.4" height="131.0" fill="#0a0a0a"/><rect x="34.599999999999994" y="240.0" width="406.09999999999997" height="129.8" fill="#191919"/>
<line x1="45.54" y1="241.0" x2="45.54" y2="368.8" stroke="#000094" stroke-width="1.05"/><line x1="54.49" y1="241.0" x2="54.49" y2="368.8" stroke="#000094" stroke-width="1.05"/><line x1="63.43" y1="241.0" x2="63.43" y2="368.8" stroke="#000094" stroke-width="1.05"/><line x1="72.38" y1="241.0" x2="72.38" y2="368.8" stroke="#000094" stroke-width="1.05"/><line x1="81.32" y1="241.0" x2="81.32" y2="368.8" stroke="#0000c8" stroke-width="1.3"/><line x1="90.27" y1="241.0" x2="90.27" y2="368.8" stroke="#000094" stroke-width="1.05"/><line x1="99.21" y1="241.0" x2="99.21" y2="368.8" stroke="#000094" stroke-width="1.05"/><line x1="108.16" y1="241.0" x2="108.16" y2="368.8" stroke="#000094" stroke-width="1.05"/><line x1="117.10" y1="241.0" x2="117.10" y2="368.8" stroke="#000094" stroke-width="1.05"/><line x1="126.04" y1="241.0" x2="126.04" y2="368.8" stroke="#0000c8" stroke-width="1.3"/><line x1="134.99" y1="241.0" x2="134.99" y2="368.8" stroke="#000094" stroke-width="1.05"/><line x1="143.93" y1="241.0" x2="143.93" y2="368.8" stroke="#000094" stroke-width="1.05"/><line x1="152.88" y1="241.0" x2="152.88" y2="368.8" stroke="#000094" stroke-width="1.05"/><line x1="161.82" y1="241.0" x2="161.82" y2="368.8" stroke="#000094" stroke-width="1.05"/><line x1="170.77" y1="241.0" x2="170.77" y2="368.8" stroke="#0000c8" stroke-width="1.3"/><line x1="179.71" y1="241.0" x2="179.71" y2="368.8" stroke="#000094" stroke-width="1.05"/><line x1="188.66" y1="241.0" x2="188.66" y2="368.8" stroke="#000094" stroke-width="1.05"/><line x1="197.60" y1="241.0" x2="197.60" y2="368.8" stroke="#000094" stroke-width="1.05"/><line x1="206.54" y1="241.0" x2="206.54" y2="368.8" stroke="#000094" stroke-width="1.05"/><line x1="215.49" y1="241.0" x2="215.49" y2="368.8" stroke="#0000c8" stroke-width="1.3"/><line x1="224.43" y1="241.0" x2="224.43" y2="368.8" stroke="#000094" stroke-width="1.05"/><line x1="233.38" y1="241.0" x2="233.38" y2="368.8" stroke="#000094" stroke-width="1.05"/><line x1="242.32" y1="241.0" x2="242.32" y2="368.8" stroke="#000094" stroke-width="1.05"/><line x1="251.27" y1="241.0" x2="251.27" y2="368.8" stroke="#000094" stroke-width="1.05"/><line x1="260.21" y1="241.0" x2="260.21" y2="368.8" stroke="#0000c8" stroke-width="1.3"/><line x1="269.16" y1="241.0" x2="269.16" y2="368.8" stroke="#000094" stroke-width="1.05"/><line x1="278.10" y1="241.0" x2="278.10" y2="368.8" stroke="#000094" stroke-width="1.05"/><line x1="287.04" y1="241.0" x2="287.04" y2="368.8" stroke="#000094" stroke-width="1.05"/><line x1="295.99" y1="241.0" x2="295.99" y2="368.8" stroke="#000094" stroke-width="1.05"/><line x1="304.93" y1="241.0" x2="304.93" y2="368.8" stroke="#0000c8" stroke-width="1.3"/><line x1="313.88" y1="241.0" x2="313.88" y2="368.8" stroke="#000094" stroke-width="1.05"/><line x1="322.82" y1="241.0" x2="322.82" y2="368.8" stroke="#000094" stroke-width="1.05"/><line x1="331.77" y1="241.0" x2="331.77" y2="368.8" stroke="#000094" stroke-width="1.05"/><line x1="340.71" y1="241.0" x2="340.71" y2="368.8" stroke="#000094" stroke-width="1.05"/><line x1="349.66" y1="241.0" x2="349.66" y2="368.8" stroke="#0000c8" stroke-width="1.3"/><line x1="358.60" y1="241.0" x2="358.60" y2="368.8" stroke="#000094" stroke-width="1.05"/><line x1="367.54" y1="241.0" x2="367.54" y2="368.8" stroke="#000094" stroke-width="1.05"/><line x1="376.49" y1="241.0" x2="376.49" y2="368.8" stroke="#000094" stroke-width="1.05"/><line x1="385.43" y1="241.0" x2="385.43" y2="368.8" stroke="#000094" stroke-width="1.05"/><line x1="394.38" y1="241.0" x2="394.38" y2="368.8" stroke="#0000c8" stroke-width="1.3"/><line x1="403.32" y1="241.0" x2="403.32" y2="368.8" stroke="#000094" stroke-width="1.05"/><line x1="412.27" y1="241.0" x2="412.27" y2="368.8" stroke="#000094" stroke-width="1.05"/><line x1="421.21" y1="241.0" x2="421.21" y2="368.8" stroke="#000094" stroke-width="1.05"/><line x1="430.16" y1="241.0" x2="430.16" y2="368.8" stroke="#000094" stroke-width="1.05"/><line x1="34.8" y1="241.00" x2="440.7" y2="241.00" stroke="#0000c8" stroke-width="2.0"/><line x1="34.8" y1="253.78" x2="440.7" y2="253.78" stroke="#000090" stroke-width="0.9"/><line x1="34.8" y1="266.56" x2="440.7" y2="266.56" stroke="#0000c8" stroke-width="1.2"/><line x1="34.8" y1="279.34" x2="440.7" y2="279.34" stroke="#000090" stroke-width="0.9"/><line x1="34.8" y1="292.12" x2="440.7" y2="292.12" stroke="#0000c8" stroke-width="1.2"/><line x1="34.8" y1="304.90" x2="440.7" y2="304.90" stroke="#000090" stroke-width="0.9"/><line x1="34.8" y1="317.68" x2="440.7" y2="317.68" stroke="#0000c8" stroke-width="1.2"/><line x1="34.8" y1="330.46" x2="440.7" y2="330.46" stroke="#000090" stroke-width="0.9"/><line x1="34.8" y1="343.24" x2="440.7" y2="343.24" stroke="#0000c8" stroke-width="1.2"/><line x1="34.8" y1="356.02" x2="440.7" y2="356.02" stroke="#000090" stroke-width="0.9"/><line x1="34.8" y1="368.80" x2="440.7" y2="368.80" stroke="#0000c8" stroke-width="1.2"/>
<rect x="38.70" y="356.02" width="2" height="12.78" fill="#1fbf1f"/><rect x="52.00" y="356.02" width="1" height="12.78" fill="#1fbf1f"/><rect x="63.40" y="343.24" width="1.6" height="25.56" fill="#1fbf1f"/><rect x="67.20" y="356.02" width="1.6" height="12.78" fill="#1fbf1f"/><rect x="72.30" y="317.68" width="2" height="51.12" fill="#1fbf1f"/><rect x="77.90" y="356.02" width="1.6" height="12.78" fill="#1fbf1f"/><rect x="81.70" y="317.68" width="1.6" height="51.12" fill="#1fbf1f"/><rect x="83.60" y="330.46" width="1.6" height="38.34" fill="#1fbf1f"/><rect x="85.80" y="317.68" width="3.4" height="51.12" fill="#1fbf1f"/><rect x="92.30" y="356.02" width="2" height="12.78" fill="#1fbf1f"/><rect x="100.15" y="330.46" width="1.3" height="38.34" fill="#1fbf1f"/><rect x="102.20" y="356.02" width="1.2" height="12.78" fill="#1fbf1f"/><rect x="107.55" y="317.68" width="1.5" height="51.12" fill="#1fbf1f"/><rect x="112.20" y="356.02" width="1.6" height="12.78" fill="#1fbf1f"/><rect x="140.70" y="304.90" width="2" height="63.90" fill="#1fbf1f"/><rect x="143.15" y="343.24" width="1.5" height="25.56" fill="#1fbf1f"/><rect x="146.90" y="356.02" width="1.8" height="12.78" fill="#1fbf1f"/><rect x="178.90" y="343.24" width="1.2" height="25.56" fill="#1fbf1f"/><rect x="214.10" y="356.02" width="1.8" height="12.78" fill="#1fbf1f"/><rect x="231.10" y="356.02" width="1.2" height="12.78" fill="#1fbf1f"/><rect x="274.90" y="330.46" width="1.8" height="38.34" fill="#1fbf1f"/><rect x="300.30" y="356.02" width="1.8" height="12.78" fill="#1fbf1f"/><rect x="307.90" y="343.24" width="1.8" height="25.56" fill="#1fbf1f"/><rect x="327.90" y="356.02" width="1.8" height="12.78" fill="#1fbf1f"/><rect x="335.80" y="343.24" width="1.8" height="25.56" fill="#1fbf1f"/><rect x="367.80" y="356.02" width="1.0" height="12.78" fill="#1fbf1f"/><rect x="381.20" y="356.02" width="2.0" height="12.78" fill="#1fbf1f"/>
<polyline points="37.0,315.8 37.8,314.6 38.5,312.2 39.2,315.9 40.0,316.7 40.8,312.6 41.5,313.1 42.2,314.6 43.0,316.7 43.8,316.4 44.5,313.9 45.2,316.5 46.0,314.1 46.8,313.0 47.5,317.7 47.8,315.1 48.4,298.5 49.0,316.4 49.8,314.2 50.5,314.0 51.2,315.7 52.0,316.0 52.8,314.9 53.5,314.4 54.2,313.6 55.0,314.4 55.8,315.2 56.5,314.9 57.2,315.0 58.0,314.2 58.8,314.3 59.5,310.2 60.2,314.5 61.0,311.8 61.8,311.5 62.5,314.0 63.2,312.8 64.0,312.2 64.8,311.5 65.5,311.4 66.2,312.7 67.0,311.6 67.8,312.1 68.5,314.5 69.2,311.4 70.0,309.4 70.8,310.9 71.5,312.2 72.2,311.8 73.0,312.7 73.8,312.3 74.5,309.7 75.2,314.1 76.0,310.6 76.8,312.8 77.5,308.0 78.2,311.5 79.0,309.1 79.8,311.5 80.5,307.3 81.2,307.1 82.0,307.0 82.8,310.6 83.5,311.8 84.2,308.6 85.0,308.4 85.8,308.4 86.5,307.1 87.2,306.8 88.0,310.5 88.8,307.1 89.5,307.3 90.2,311.7 91.0,309.6 91.8,311.6 92.5,307.8 93.2,308.4 94.0,312.0 94.8,312.4 95.5,308.6 96.2,312.6 97.0,311.8 97.8,310.8 98.5,312.2 99.2,309.8 100.0,309.7 100.8,309.3 101.5,310.1 102.2,311.7 103.0,312.1 103.8,311.8 104.5,314.6 105.2,314.5 106.0,309.5 106.8,313.4 107.5,309.9 108.2,310.4 109.0,312.5 109.8,311.5 110.5,311.6 111.2,313.7 112.0,314.4 112.8,314.0 113.5,311.3 114.2,313.7 115.0,309.4 115.8,310.9 116.5,314.4 117.2,313.9 118.0,311.2 118.8,314.4 119.5,314.2 120.2,314.4 121.0,310.0 121.8,310.5 122.5,313.5 123.2,309.5 124.0,311.7 124.8,311.0 125.5,309.9 126.2,310.6 127.0,310.8 127.8,312.6 128.5,313.3 129.2,313.5 130.0,314.4 130.8,309.4 131.5,309.5 132.2,310.3 133.0,313.8 133.8,310.1 134.5,310.6 135.2,311.4 136.0,313.1 136.8,309.5 137.5,310.2 138.2,312.0 139.0,311.7 139.8,312.0 140.5,310.8 141.2,306.7 142.0,310.5 142.8,306.9 143.5,306.4 144.2,307.4 145.0,308.5 145.8,309.4 146.5,310.5 147.2,308.1 148.0,307.8 148.8,311.9 149.5,309.3 150.2,311.5 151.0,309.5 151.8,311.8 152.5,309.0 153.2,308.2 154.0,307.6 154.8,309.0 155.5,310.5 156.2,309.7 157.0,309.2 157.8,310.5 158.5,308.0 159.2,311.8 160.0,310.2 160.8,310.9 161.5,307.1 162.2,305.8 163.0,304.5 163.8,305.9 164.5,303.7 165.2,306.1 166.0,305.8 166.8,308.0 167.5,304.5 168.2,303.8 169.0,307.6 169.8,308.0 170.5,303.8 171.2,304.7 172.0,306.2 172.8,303.5 173.5,305.8 174.2,308.3 175.0,307.1 175.8,309.6 176.5,306.4 177.2,307.9 178.0,310.0 178.8,311.7 179.5,310.6 180.2,312.1 181.0,312.5 181.8,311.9 182.5,311.3 183.2,313.3 184.0,309.0 184.8,310.9 185.5,309.3 186.2,313.7 187.0,311.3 187.8,310.8 188.5,311.3 189.2,314.4 190.0,311.5 190.8,311.6 191.5,309.5 192.2,311.5 193.0,310.7 193.8,311.7 194.5,310.7 195.2,309.3 196.0,311.6 196.8,311.7 197.5,311.2 198.2,309.5 199.0,309.2 199.8,310.2 200.5,311.5 201.2,308.9 202.0,308.5 202.8,309.6 203.5,309.0 204.2,307.6 205.0,309.0 205.8,309.6 206.5,311.0 207.2,311.6 208.0,307.7 208.8,311.4 209.5,307.7 210.2,307.4 211.0,311.9 211.8,309.2 212.5,311.7 213.2,311.9 214.0,311.9 214.8,311.1 215.5,310.9 216.2,310.7 217.0,311.3 217.8,306.7 218.5,309.8 219.2,306.3 220.0,308.3 220.8,310.7 221.5,306.2 222.2,308.5 223.0,309.6 223.8,305.6 224.5,309.3 225.2,310.8 226.0,309.5 226.8,307.0 227.5,310.9 228.2,309.7 229.0,306.4 229.8,307.2 230.5,307.8 231.2,307.5 232.0,306.5 232.8,307.5 233.5,307.6 234.2,306.4 235.0,307.7 235.8,308.0 236.5,309.9 237.2,310.2 238.0,310.5 238.8,308.9 239.5,309.8 240.2,307.4 241.0,306.4 241.8,309.9 242.5,309.1 243.2,307.4 244.0,310.5 244.8,306.7 245.5,308.7 246.2,311.2 247.0,306.7 247.8,308.6 248.5,307.8 249.2,306.7 250.0,306.6 250.8,309.8 251.5,311.6 252.2,307.4 253.0,307.1 253.8,311.5 254.5,310.9 255.2,311.2 256.0,308.7 256.8,307.5 257.5,311.6 258.2,310.7 259.0,307.9 259.8,309.9 260.5,311.1 261.2,309.6 262.0,312.0 262.8,307.3 263.5,309.0 264.2,308.6 265.0,306.0 265.8,307.0 266.5,303.6 267.2,307.6 268.0,305.8 268.8,303.6 269.5,304.7 270.2,305.4 271.0,305.3 271.8,307.4 272.5,306.7 273.2,308.5 274.0,308.4 274.8,303.9 275.5,305.7 276.2,305.7 277.0,306.5 277.8,309.3 278.5,308.6 279.2,308.3 280.0,305.7 280.8,305.5 281.5,305.4 282.2,305.5 283.0,308.2 283.8,309.8 284.5,305.6 285.2,310.2 286.0,306.3 286.8,309.5 287.5,307.1 288.2,306.6 289.0,306.1 289.8,309.7 290.5,306.9 291.2,306.0 292.0,306.1 292.8,308.2 293.5,305.0 294.2,306.2 295.0,306.8 295.8,306.1 296.5,307.7 297.2,306.0 298.0,309.0 298.8,306.4 299.5,306.5 300.2,304.8 301.0,306.4 301.8,307.4 302.5,305.7 303.2,305.6 304.0,308.0 304.8,306.3 305.5,308.1 306.2,307.1 307.0,306.3 307.8,309.2 308.5,304.8 309.2,308.7 310.0,307.9 310.8,307.4 311.5,308.9 312.2,306.3 313.0,307.6 313.8,304.2 314.5,306.4 315.2,307.3 316.0,306.0 316.8,305.5 317.5,307.9 318.2,308.6 319.0,307.4 319.8,305.6 320.5,305.8 321.2,304.3 322.0,307.9 322.8,306.5 323.5,304.7 324.2,307.8 325.0,306.7 325.8,306.0 326.5,305.6 327.2,305.2 328.0,303.7 328.8,308.4 329.5,304.1 330.2,306.0 331.0,305.5 331.8,307.4 332.5,306.3 333.2,307.8 334.0,308.6 334.8,304.5 335.5,305.4 336.2,308.4 337.0,308.4 337.8,306.8 338.5,304.6 339.2,306.5 340.0,306.0 340.8,306.4 341.5,304.2 342.2,305.3 343.0,307.7 343.8,308.2 344.5,305.8 345.2,305.1 346.0,308.2 346.8,307.4 347.5,305.3 348.2,306.4 349.0,307.5 349.8,306.6 350.5,306.8 351.2,303.7 352.0,305.5 352.8,308.2 353.5,307.2 354.2,305.7 355.0,309.0 355.8,308.9 356.5,305.2 357.2,303.8 358.0,304.8 358.8,308.7 359.5,306.6 360.2,305.1 361.0,308.2 361.8,307.8 362.4,306.2 363.0,301.7 363.7,306.2 364.0,306.6 364.8,308.2 365.5,308.3 366.2,305.3 367.0,307.0 367.8,304.6 368.5,305.8 369.2,303.9 370.0,307.2 370.8,306.9 371.5,307.4 372.2,308.4 373.0,307.2 373.8,306.8 374.5,306.0 375.2,306.9 376.0,303.4 376.8,303.9 377.5,306.8 378.2,307.5 379.0,306.0 379.8,307.9 380.5,307.5 381.2,304.7 382.0,307.9 382.8,303.3 383.5,308.0 384.2,303.2 385.0,306.3 385.8,305.5 386.5,306.3 387.2,305.4 388.0,306.3 388.8,307.8 389.5,308.2 390.2,304.0 391.0,305.8 391.8,304.3 392.5,308.0 393.2,305.7 394.0,305.4 394.8,306.3 395.5,307.5 396.2,304.7 397.0,304.6 397.8,303.6 398.5,307.8 399.2,308.0 400.0,304.8 400.8,304.8 401.5,307.3 402.2,304.6 403.0,303.5 403.8,305.9 404.5,307.6 405.2,303.1 406.0,308.0 406.8,303.4 407.5,307.3 408.2,306.4 409.0,304.2 409.8,303.4 410.5,307.0 411.2,307.8 412.0,307.8 412.8,304.9 413.5,304.8 414.2,303.0 415.0,305.2 415.8,305.1 416.5,303.4 417.2,303.7 418.0,305.6 418.8,304.1 419.5,305.6 420.2,307.4 421.0,304.1 421.8,304.5 422.5,302.4 423.2,304.2 424.0,306.8 424.8,303.5 425.5,304.7 426.2,307.2 427.0,305.1" fill="none" stroke="#d822d8" stroke-width="1.25" stroke-linejoin="round"/>
<line x1="428.3" y1="241.0" x2="428.3" y2="368.8" stroke="#c0c0c0" stroke-width="1.1"/>
</svg>
<div class="t r ax" style="left:-90.0px;width:120px;top:78.1px;">20</div>
<div class="t r ax" style="left:-90.0px;width:120px;top:103.8px;">16</div>
<div class="t r ax" style="left:-90.0px;width:120px;top:129.4px;">12</div>
<div class="t r ax" style="left:-90.0px;width:120px;top:155.1px;">8</div>
<div class="t r ax" style="left:-90.0px;width:120px;top:180.7px;">4</div>
<div class="t ax" style="left:443.4px;top:78.1px;">16</div>
<div class="t ax" style="left:443.4px;top:94.1px;">14</div>
<div class="t ax" style="left:443.4px;top:110.2px;">12</div>
<div class="t ax" style="left:443.4px;top:126.2px;">10</div>
<div class="t ax" style="left:443.4px;top:142.2px;">8</div>
<div class="t ax" style="left:443.4px;top:158.3px;">6</div>
<div class="t ax" style="left:443.4px;top:174.3px;">4</div>
<div class="t ax" style="left:443.4px;top:190.4px;">2</div>
<div class="t r ax" style="left:-90.0px;width:120px;top:234.1px;">10</div>
<div class="t r ax" style="left:-90.0px;width:120px;top:259.7px;">8</div>
<div class="t r ax" style="left:-90.0px;width:120px;top:285.2px;">6</div>
<div class="t r ax" style="left:-90.0px;width:120px;top:310.8px;">4</div>
<div class="t r ax" style="left:-90.0px;width:120px;top:336.3px;">2</div>
<div class="t ax" style="left:443.4px;top:234.1px;">20</div>
<div class="t ax" style="left:443.4px;top:259.7px;">16</div>
<div class="t ax" style="left:443.4px;top:285.2px;">12</div>
<div class="t ax" style="left:443.4px;top:310.8px;">8</div>
<div class="t ax" style="left:443.4px;top:336.3px;">4</div>
<div class="t ax" style="left:18.1px;width:40px;text-align:center;top:215.6px;">0.0</div>
<div class="t ax" style="left:18.1px;width:40px;text-align:center;top:371.4px;">0.0</div>
<div class="t ax" style="left:62.8px;width:40px;text-align:center;top:215.6px;">0.5</div>
<div class="t ax" style="left:62.8px;width:40px;text-align:center;top:371.4px;">0.5</div>
<div class="t ax" style="left:107.5px;width:40px;text-align:center;top:215.6px;">1.0</div>
<div class="t ax" style="left:107.5px;width:40px;text-align:center;top:371.4px;">1.0</div>
<div class="t ax" style="left:152.3px;width:40px;text-align:center;top:215.6px;">1.5</div>
<div class="t ax" style="left:152.3px;width:40px;text-align:center;top:371.4px;">1.5</div>
<div class="t ax" style="left:197.0px;width:40px;text-align:center;top:215.6px;">2.0</div>
<div class="t ax" style="left:197.0px;width:40px;text-align:center;top:371.4px;">2.0</div>
<div class="t ax" style="left:241.7px;width:40px;text-align:center;top:215.6px;">2.5</div>
<div class="t ax" style="left:241.7px;width:40px;text-align:center;top:371.4px;">2.5</div>
<div class="t ax" style="left:286.4px;width:40px;text-align:center;top:215.6px;">3.0</div>
<div class="t ax" style="left:286.4px;width:40px;text-align:center;top:371.4px;">3.0</div>
<div class="t ax" style="left:331.2px;width:40px;text-align:center;top:215.6px;">3.5</div>
<div class="t ax" style="left:331.2px;width:40px;text-align:center;top:371.4px;">3.5</div>
<div class="t ax" style="left:375.9px;width:40px;text-align:center;top:215.6px;">4.0</div>
<div class="t ax" style="left:375.9px;width:40px;text-align:center;top:371.4px;">4.0</div>
<div class="t ax" style="left:420.6px;width:40px;text-align:center;top:215.6px;">4.5</div>
<div class="t ax" style="left:420.6px;width:40px;text-align:center;top:371.4px;">4.5</div>
<div class="gb" style="left:463px;top:79px;width:135px;height:79px;"></div>
<div class="lg" style="left:470px;top:74px;width:69px;background:#fcfcfd;"></div>
<div class="t bl" style="left:472px;top:73.4px;">Инф. о диске</div>
<div class="t " style="left:472px;top:86.9px;">Тип:</div>
<div class="t nv" style="left:515.5px;top:86.9px;">DVD+R</div>
<div class="t " style="left:472px;top:103.9px;">ID:</div>
<div class="t nv" style="left:515.5px;top:103.9px;">MCC 004</div>
<div class="t " style="left:472px;top:120.9px;">Дата:</div>
<div class="t nv" style="left:515.5px;top:120.9px;">30 Jan 2007</div>
<div class="t " style="left:472px;top:137.9px;">Метка:</div>
<div class="gb" style="left:463px;top:166px;width:135px;height:196px;"></div>
<div class="lg" style="left:470px;top:161px;width:57px;background:#fbfbfb;"></div>
<div class="t bl" style="left:472px;top:160.4px;letter-spacing:0.45px;">Установки</div>
<div class="inp" style="left:472px;top:175px;width:80px;height:20px;"></div>
<div class="t " style="left:476px;top:179.9px;">8 X</div>
<div class="dd" style="left:536px;top:177px;width:15px;height:16px;"></div>
<svg class="abs" style="left:539px;top:182px" width="9" height="7" viewBox="0 0 9 7"><path d="M1 1 L4.5 4.6 L8 1" fill="none" stroke="#3a3f4a" stroke-width="1.9"/></svg>
<div class="abs" style="left:561px;top:174.5px;width:22px;height:20.5px;box-sizing:border-box;background:#f5f4ef;border:1px solid;border-color:#fff #555 #555 #fff;border-right-width:1.5px;border-bottom-width:1.5px;"></div>
<svg class="abs" style="left:563.5px;top:176.5px" width="15" height="16.5" viewBox="0 0 15 16.5"><rect x="1" y="0.9" width="13" height="14.6" rx="1.2" fill="#fff" stroke="#1c1c1c" stroke-width="1.4"/><path d="M4.6 6.8 C4.6 4.6 6 4.2 8.4 4.3" fill="none" stroke="#22b022" stroke-width="1.5"/><path d="M7.6 2.6 L10.2 4.4 L7.6 6.2 Z" fill="#22b022"/><path d="M10.6 9.4 C10.6 11.6 9.2 12 6.8 11.9" fill="none" stroke="#22b022" stroke-width="1.5"/><path d="M7.6 10 L5 11.8 L7.6 13.6 Z" fill="#22b022"/></svg>
<div class="t " style="left:474.5px;top:205.9px;">Старт:</div>
<div class="inp" style="left:523.5px;top:200px;width:58px;height:19px;"></div>
<div class="t " style="left:527px;top:204.4px;">0000 MB</div>
<div class="t " style="left:474.5px;top:227.9px;">Конец:</div>
<div class="inp" style="left:523.5px;top:222px;width:58px;height:19px;"></div>
<div class="t " style="left:527px;top:226.4px;">4476 MB</div>
<div class="cb" style="left:474px;top:244.0px;border-color:#1c5180;"></div>
<div class="t " style="left:490px;top:244.9px;">Быстр.скан.</div>
<div class="cb" style="left:474px;top:260.5px;border-color:#1c5180;"></div>
<svg class="abs" style="left:475px;top:261.5px" width="10" height="10" viewBox="0 0 10 10"><path d="M1.5 4.5 L4 7.2 L8.5 2" fill="none" stroke="#21a121" stroke-width="1.9"/></svg>
<div class="t " style="left:490px;top:261.4px;">Отобр. C1/PIE</div>
<div class="cb" style="left:474px;top:275.5px;border-color:#1c5180;"></div>
<svg class="abs" style="left:475px;top:276.5px" width="10" height="10" viewBox="0 0 10 10"><path d="M1.5 4.5 L4 7.2 L8.5 2" fill="none" stroke="#21a121" stroke-width="1.9"/></svg>
<div class="t " style="left:490px;top:276.4px;">Отобр. C2/PIF</div>
<div class="cb" style="left:474px;top:290.5px;border-color:#1c5180;"></div>
<svg class="abs" style="left:475px;top:291.5px" width="10" height="10" viewBox="0 0 10 10"><path d="M1.5 4.5 L4 7.2 L8.5 2" fill="none" stroke="#21a121" stroke-width="1.9"/></svg>
<div class="t " style="left:490px;top:291.4px;">Отобр. Jitter</div>
<div class="cb" style="left:474px;top:305.8px;border-color:#1c5180;"></div>
<svg class="abs" style="left:475px;top:306.8px" width="10" height="10" viewBox="0 0 10 10"><path d="M1.5 4.5 L4 7.2 L8.5 2" fill="none" stroke="#21a121" stroke-width="1.9"/></svg>
<div class="t " style="left:490px;top:306.7px;">Отобр. скор. чтения</div>
<div class="cb" style="left:474px;top:320.5px;border-color:#cac8bb;"></div>
<svg class="abs" style="left:475px;top:321.5px" width="10" height="10" viewBox="0 0 10 10"><path d="M1.5 4.5 L4 7.2 L8.5 2" fill="none" stroke="#b8b8a8" stroke-width="1.9"/></svg>
<div class="t gr" style="left:490px;top:321.4px;">Отобр. скор. записи</div>
<div class="btn" style="left:521px;top:338px;width:70px;height:20px;"></div>
<div class="t c" style="left:521px;top:342.4px;width:70px;">Advanced</div>
<div class="gb" style="left:463px;top:367px;width:135px;height:26px;"></div>
<div class="t " style="left:474px;top:375.4px;">Индекс</div>
<div class="t r " style="left:468px;width:120px;top:375.4px;">97</div>
<div class="gb" style="left:463px;top:399px;width:135px;height:54px;"></div>
<div class="t " style="left:474px;top:408.1px;">Выполнено:</div>
<div class="t r nv" style="left:468px;width:120px;top:408.1px;">100 %</div>
<div class="t " style="left:474px;top:422.9px;">Положение:</div>
<div class="t r nv" style="left:468px;width:120px;top:422.9px;">4475 MB</div>
<div class="t " style="left:474px;top:437.4px;">Скорость:</div>
<div class="t r nv" style="left:468px;width:120px;top:437.4px;">8.34 X</div>
<div class="eg" style="left:4px;top:398.5px;width:141px;height:54.5px;"></div>
<div class="lg" style="left:11px;top:393.5px;width:52px;background:#f7f6f2;height:11px;"></div>
<div class="abs" style="left:14px;top:395.0px;width:7px;height:7px;box-sizing:border-box;border:1px solid #222;background:#00e8e8;"></div>
<div class="t " style="left:24px;top:393.4px;letter-spacing:-0.35px;">PI Errors</div>
<div class="eg" style="left:154.5px;top:398.5px;width:141.5px;height:54.5px;"></div>
<div class="lg" style="left:162px;top:393.5px;width:62px;background:#f7f6f2;height:11px;"></div>
<div class="abs" style="left:165px;top:395.0px;width:7px;height:7px;box-sizing:border-box;border:1px solid #222;background:#c4c4b0;"></div>
<div class="t " style="left:177px;top:393.4px;letter-spacing:-0.35px;">PI Failures</div>
<div class="eg" style="left:309.5px;top:398.5px;width:141.5px;height:40.5px;"></div>
<div class="lg" style="left:316.5px;top:393.5px;width:36px;background:#f7f6f2;height:11px;"></div>
<div class="abs" style="left:319.5px;top:395.0px;width:7px;height:7px;box-sizing:border-box;border:1px solid #222;background:#e010e0;"></div>
<div class="t " style="left:329.5px;top:393.4px;letter-spacing:-0.35px;">Jitter</div>
<div class="t " style="left:12px;top:408.9px;">Среднее:</div>
<div class="t " style="left:165px;top:408.9px;">Среднее:</div>
<div class="t " style="left:12px;top:423.1px;">Максим.:</div>
<div class="t " style="left:165px;top:423.1px;">Максим.:</div>
<div class="t " style="left:12px;top:437.1px;">Итого:</div>
<div class="t " style="left:165px;top:437.1px;">Итого:</div>
<div class="t r nv" style="left:16px;width:120px;top:408.9px;">2.53</div>
<div class="t r nv" style="left:16px;width:120px;top:423.1px;">19</div>
<div class="t r nv" style="left:16px;width:120px;top:437.1px;">23405</div>
<div class="t r nv" style="left:168.5px;width:120px;top:408.9px;">0.03</div>
<div class="t r nv" style="left:168.5px;width:120px;top:423.1px;">5</div>
<div class="t r nv" style="left:168.5px;width:120px;top:437.1px;">237</div>
<div class="t " style="left:318px;top:408.9px;">Среднее:</div>
<div class="t r nv" style="left:321.5px;width:120px;top:408.9px;">9.19 %</div>
<div class="t " style="left:318px;top:423.1px;">Максим.:</div>
<div class="t r nv" style="left:321.5px;width:120px;top:423.1px;">10.9 %</div>
<div class="t " style="left:318px;top:441.4px;">Сбои PO:</div>
<div class="t r " style="left:321.5px;width:120px;top:441.4px;">0</div>
</body></html>
